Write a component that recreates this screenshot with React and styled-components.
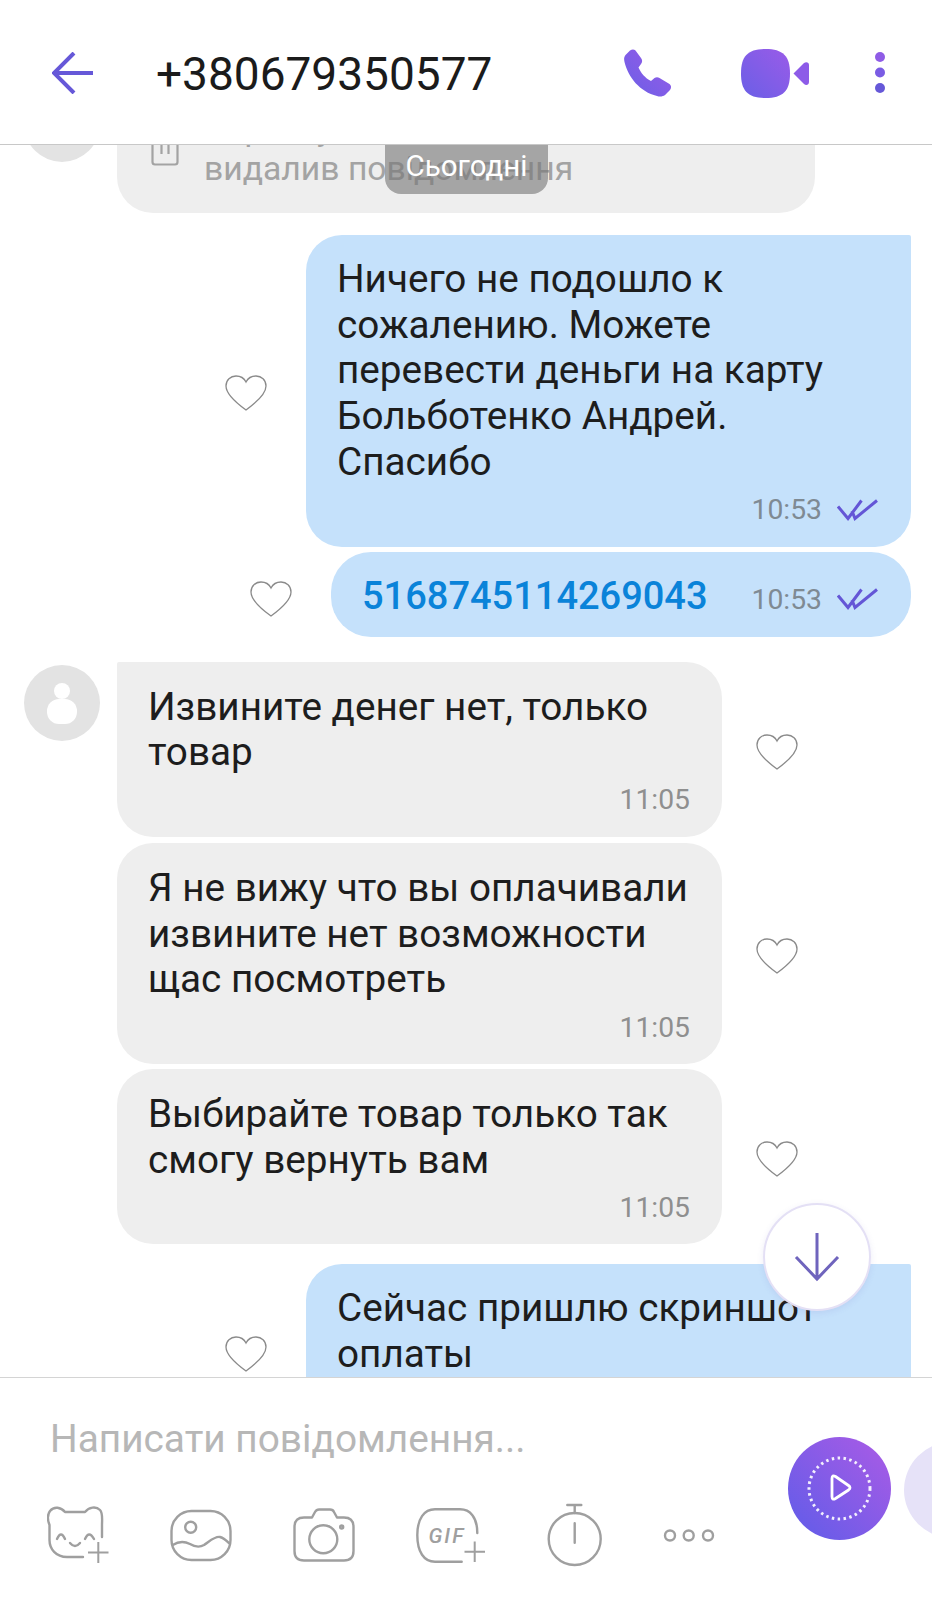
import React from "react";
import styled, { createGlobalStyle } from "styled-components";

const GlobalStyle = createGlobalStyle`
  html, body {
    margin: 0;
    padding: 0;
    background: #fff;
  }
  * {
    box-sizing: border-box;
  }
`;

const PURPLE = "#6456d6";
const GREY_ICON = "#9f9f9f";

function Gradient({ id }) {
  return (
    <defs>
      <linearGradient id={id} x1="0" y1="1" x2="1" y2="0">
        <stop offset="0" stopColor="#6a5fe6" />
        <stop offset="1" stopColor="#9a5be8" />
      </linearGradient>
    </defs>
  );
}

function BackIcon() {
  return (
    <HeadIcon width="41" height="42" viewBox="0 0 41 42">
      <path d="M2 21H41M22 1L2 21L22 41" fill="none" stroke="#6658d8" strokeWidth="4" />
    </HeadIcon>
  );
}

function PhoneIcon() {
  return (
    <HeadIcon width="48" height="48" viewBox="0 0 48 48">
      <Gradient id="phoneFill" />
      <path
        d="M6 1.5C8 0 10 0 11.5 1.5L17 9C18.5 11 18.5 13 17 15L14.5 18.5C17 24 21 29 27 32L30.5 29C32 28 34 28 35.5 29L45.5 35C47.5 36.5 47.5 39 46 41L41 46C39 47.5 36 48 33 47C16 43 4 28 .5 13C-.2 10 0 8 1.5 6Z"
        fill="url(#phoneFill)"
      />
    </HeadIcon>
  );
}

function VideoIcon() {
  return (
    <HeadIcon width="68" height="49" viewBox="0 0 68 49">
      <Gradient id="videoFill" />
      <path d="M24.5 0C42 0 49 7 49 24.5C49 42 42 49 24.5 49C7 49 0 42 0 24.5C0 7 7 0 24.5 0Z" fill="url(#videoFill)" />
      <path d="M52.5 24.5L63 14C65 12.5 68 13 68 16V33C68 36 65 37 63 35Z" fill="#8d5be8" />
    </HeadIcon>
  );
}

function MoreIcon() {
  return (
    <HeadIcon width="10" height="42" viewBox="0 0 10 42">
      <circle cx="5" cy="5" r="5" fill="#8f5ce6" />
      <circle cx="5" cy="20.5" r="5" fill="#7a5ce4" />
      <circle cx="5" cy="36" r="5" fill="#6658d8" />
    </HeadIcon>
  );
}

function TrashIcon() {
  return (
    <DeletedIcon width="28" height="40" viewBox="0 0 28 40">
      <path d="M1.5 0V36Q1.5 38.5 4 38.5H24Q26.5 38.5 26.5 36V0M10.5 0V28M17.5 0V28" fill="none" stroke="#a3a3a3" strokeWidth="2.2" />
    </DeletedIcon>
  );
}

function HeartIcon({ $drop }) {
  return (
    <HeartSvg $drop={$drop} width="42" height="36" viewBox="0 0 42 36">
      <path
        d="M21 35C10 27 1 19 1 11C1 5 5.5 1 11 1C15 1 19 3 21 7C23 3 27 1 31 1C36.5 1 41 5 41 11C41 19 32 27 21 35Z"
        fill="#fff"
        stroke="#8a8a8a"
        strokeWidth="1.3"
      />
    </HeartSvg>
  );
}

function TicksIcon() {
  return (
    <svg width="41" height="22" viewBox="0 0 41 22">
      <path d="M1 7.5L11 19.5L24.5 1.5M15 12L18 19.5L40 1.5" fill="none" stroke={PURPLE} strokeWidth="3" />
    </svg>
  );
}

function PersonIcon() {
  return (
    <svg width="30" height="42" viewBox="0 0 30 42">
      <circle cx="15" cy="9" r="8" fill="#fff" />
      <rect x="0" y="17" width="30" height="25" rx="12" fill="#fff" />
    </svg>
  );
}

function StickerIcon() {
  return (
    <ToolSvg viewBox="0 0 72 66">
      <path d="M36 54H20C9 54 2.5 46 2.5 37V22C.5 17 0 12 3 8C7 3 14 4 18 9H38C42 4 49 3 53 7C56 10 55 16 55 22V34" />
      <path d="M10 36Q14 27 18 36M38 36Q42 27 47 36M23 40Q28 46 33 40" />
      <ToolPlus d="M51.3 39V60M41 49.5H61.5" />
    </ToolSvg>
  );
}

function GalleryIcon() {
  return (
    <ToolSvg viewBox="0 0 72 66">
      <rect x="1.5" y="8" width="59" height="49" rx="20" />
      <circle cx="20.7" cy="24.3" r="5.5" />
      <path d="M2.7 42C9 38 14 38 20 41C25 44 29 45 34 42C40 38 45 33 50 34C54 35 57 38 59.3 40.3" />
    </ToolSvg>
  );
}

function CameraIcon() {
  return (
    <ToolSvg viewBox="0 0 72 66">
      <path d="M1.5 24Q1.5 14.5 11 14.5H19L22 9Q23.5 6.5 26 6.5H37Q40 6.5 41 9L44 14.5H51Q60.5 14.5 60.5 24V48Q60.5 57.5 51 57.5H11Q1.5 57.5 1.5 48Z" />
      <circle cx="30.3" cy="36.3" r="14" />
      <circle cx="48.7" cy="24" r="1.5" />
    </ToolSvg>
  );
}

function GifIcon() {
  return (
    <ToolSvg viewBox="0 0 72 66">
      <path d="M61.3 30C61.3 14 54 6.3 44 6.3H19C8 6.3 1.3 16 1.3 32C1.3 49 8 58.7 19 58.7H45.7" />
      <GifLabel x="12.5" y="40">GIF</GifLabel>
      <ToolPlus d="M58.7 38.5V59M48.5 48.7H69" />
    </ToolSvg>
  );
}

function TimerIcon() {
  return (
    <ToolSvg viewBox="0 0 72 66">
      <circle cx="35.7" cy="36" r="26" />
      <path d="M28.3 2H42.3M35.7 2V10M35.7 20.3V39.7" />
    </ToolSvg>
  );
}

function DotsIcon() {
  return (
    <ToolSvg viewBox="0 0 72 66">
      <circle cx="8" cy="32.5" r="5" />
      <circle cx="26.7" cy="32.5" r="5" />
      <circle cx="46" cy="32.5" r="5" />
    </ToolSvg>
  );
}

function SendIcon() {
  return (
    <SendSvg width="103" height="103" viewBox="0 0 103 103">
      <defs>
        <linearGradient id="sendFill" x1="0.15" y1="0.85" x2="0.85" y2="0.15">
          <stop offset="0" stopColor="#6a5ce8" />
          <stop offset="1" stopColor="#a05be6" />
        </linearGradient>
      </defs>
      <circle cx="51.5" cy="51.5" r="51.5" fill="url(#sendFill)" />
      <circle cx="51.5" cy="51.5" r="30.5" fill="none" stroke="#fff" strokeWidth="3" strokeDasharray="2.5 3.4" opacity=".9" />
      <path d="M44 41.5Q44 37.5 47.5 39.5L60.5 48.5Q63.5 50.5 60.5 53L47.5 61.5Q44 63.5 44 59.5Z" fill="none" stroke="#fff" strokeWidth="2.8" />
    </SendSvg>
  );
}

function DownIcon() {
  return (
    <svg width="46" height="50" viewBox="0 0 46 50">
      <path d="M23 1V47M2 25L23 47L44 25" fill="none" stroke="#6f64bd" strokeWidth="3" />
    </svg>
  );
}

function Stamp({ time, read }) {
  return (
    <StampRow>
      <Time>{time}</Time>
      {read && <TicksIcon />}
    </StampRow>
  );
}

export default function App() {
  return (
    <Page>
      <GlobalStyle />
      <Header>
        <BackSlot>
          <BackIcon />
        </BackSlot>
        <Title>+380679350577</Title>
        <CallSlot>
          <PhoneIcon />
        </CallSlot>
        <VideoSlot>
          <VideoIcon />
        </VideoSlot>
        <MoreIcon />
      </Header>

      <Chat>
        <DatePill>Сьогодні</DatePill>

        <Row $top={-62}>
          <Avatar />
          <DeletedBubble>
            <TrashIcon />
            <DeletedText>
              Користувач
              <br />
              видалив повідомлення
            </DeletedText>
          </DeletedBubble>
        </Row>

        <OutRow $top={22}>
          <HeartIcon />
          <OutBubble $first>
            <MsgText>
              Ничего не подошло к
              <br />
              сожалению. Можете
              <br />
              перевести деньги на карту
              <br />
              Больботенко Андрей.
              <br />
              Спасибо
            </MsgText>
            <Stamp time="10:53" read />
          </OutBubble>
        </OutRow>

        <OutRow $top={5}>
          <HeartIcon $drop={9} />
          <CardBubble>
            <CardNumber>5168745114269043</CardNumber>
            <Stamp time="10:53" read />
          </CardBubble>
        </OutRow>

        <Row $top={25}>
          <Avatar>
            <PersonIcon />
          </Avatar>
          <InBubble $first>
            <MsgText>
              Извините денег нет, только
              <br />
              товар
            </MsgText>
            <Stamp time="11:05" />
          </InBubble>
          <HeartIcon />
        </Row>

        <InRow $top={6}>
          <InBubble>
            <MsgText>
              Я не вижу что вы оплачивали
              <br />
              извините нет возможности
              <br />
              щас посмотреть
            </MsgText>
            <Stamp time="11:05" />
          </InBubble>
          <HeartIcon />
        </InRow>

        <InRow $top={5}>
          <InBubble>
            <MsgText>
              Выбирайте товар только так
              <br />
              смогу вернуть вам
            </MsgText>
            <Stamp time="11:05" />
          </InBubble>
          <HeartIcon />
        </InRow>

        <OutRow $top={20}>
          <HeartIcon />
          <OutBubble $first>
            <MsgText>
              Сейчас пришлю скриншот
              <br />
              оплаты
            </MsgText>
            <Stamp time="11:06" />
          </OutBubble>
        </OutRow>

        <ScrollDown>
          <DownIcon />
        </ScrollDown>
      </Chat>

      <Composer>
        <InputCol>
          <Placeholder>Написати повідомлення...</Placeholder>
          <Tools>
            <StickerIcon />
            <GalleryIcon />
            <CameraIcon />
            <GifIcon />
            <TimerIcon />
            <DotsIcon />
          </Tools>
        </InputCol>
        <SendIcon />
        <PeekCircle />
      </Composer>
    </Page>
  );
}

const Page = styled.div`
  width: 932px;
  height: 1600px;
  display: flex;
  flex-direction: column;
  overflow: hidden;
  background: #fff;
  font-family: Roboto, "Liberation Sans", sans-serif;
`;

const Header = styled.header`
  height: 145px;
  flex-shrink: 0;
  display: flex;
  align-items: center;
  padding: 2px 47px 0 52px;
  background: #fff;
  border-bottom: 1px solid #c8c8c8;
  position: relative;
  z-index: 2;
`;

const HeadIcon = styled.svg`
  display: block;
  flex-shrink: 0;
`;

const BackSlot = styled.div`
  width: 104px;
`;

const Title = styled.div`
  flex: 1;
  padding-top: 2px;
  font-size: 46px;
  color: #1b1b1b;
  line-height: 56px;
`;

const CallSlot = styled.div`
  margin-right: 69px;
`;

const VideoSlot = styled.div`
  margin-right: 66px;
`;

const Chat = styled.main`
  flex: 1;
  min-height: 0;
  position: relative;
  overflow: hidden;
  display: flex;
  flex-direction: column;
`;

const DatePill = styled.div`
  position: absolute;
  top: 0;
  left: 385px;
  width: 163px;
  height: 49px;
  padding-bottom: 7px;
  display: flex;
  align-items: center;
  justify-content: center;
  border-radius: 0 0 16px 16px;
  background: rgba(120, 120, 120, 0.62);
  color: #fff;
  font-size: 29.5px;
  z-index: 1;
`;

const Row = styled.div`
  display: flex;
  align-items: center;
  flex-shrink: 0;
  margin-top: ${(p) => p.$top}px;
  padding-left: 24px;
`;

const InRow = styled(Row)`
  padding-left: 117px;
`;

const OutRow = styled.div`
  display: flex;
  align-items: center;
  justify-content: flex-end;
  flex-shrink: 0;
  gap: 39px;
  margin-top: ${(p) => p.$top}px;
  padding-right: 21px;
`;

const HeartSvg = styled.svg`
  flex-shrink: 0;
  margin-top: ${(p) => p.$drop ?? 5}px;
  ${Row} > & {
    margin-left: 34px;
  }
`;

const Avatar = styled.div`
  width: 76px;
  height: 76px;
  margin: 3px 17px 0 0;
  align-self: flex-start;
  flex-shrink: 0;
  border-radius: 50%;
  background: #e3e3e3;
  display: flex;
  align-items: center;
  justify-content: center;
`;

const Bubble = styled.div`
  border-radius: 36px;
  flex-shrink: 0;
`;

const DeletedBubble = styled(Bubble)`
  width: 698px;
  height: 130px;
  display: flex;
  padding: 26px 0 0 34px;
  background: #eeeeee;
`;

const DeletedIcon = styled.svg`
  margin-top: 17px;
  flex-shrink: 0;
`;

const DeletedText = styled.div`
  margin-left: 25px;
  font-size: 33.7px;
  line-height: 40px;
  color: #a3a3a3;
`;

const OutBubble = styled(Bubble)`
  width: 605px;
  padding: 21px 33px 0 31px;
  background: #c5e1fb;
  border-top-right-radius: ${(p) => (p.$first ? "2px" : "36px")};
`;

const InBubble = styled(Bubble)`
  width: 605px;
  padding: 22px 32px 0 31px;
  background: #eeeeee;
  border-top-left-radius: ${(p) => (p.$first ? "2px" : "36px")};
`;

const CardBubble = styled(Bubble)`
  width: 580px;
  height: 85px;
  display: flex;
  align-items: center;
  justify-content: space-between;
  padding: 0 33px 0 31px;
  background: #c5e1fb;
  border-radius: 40px;
`;

const MsgText = styled.div`
  font-size: 38.7px;
  line-height: 45.7px;
  color: #1d1d1d;
  white-space: nowrap;
`;

const CardNumber = styled.div`
  padding-top: 4px;
  font-size: 38px;
  font-weight: 500;
  color: #0a83d9;
`;

const StampRow = styled.div`
  display: flex;
  align-items: center;
  justify-content: flex-end;
  gap: 15px;
  height: 30px;
  margin-bottom: 22px;
  margin-top: 10px;
  ${CardBubble} & {
    margin: 10px 0 0;
  }
`;

const Time = styled.span`
  font-size: 28.3px;
  color: #7f8a93;
  ${InBubble} & {
    color: #8f8f8f;
  }
`;

const ScrollDown = styled.div`
  position: absolute;
  left: 763px;
  top: 1058px;
  width: 108px;
  height: 108px;
  display: flex;
  align-items: center;
  justify-content: center;
  border-radius: 50%;
  background: #fff;
  border: 2px solid #e4e0f5;
  box-shadow: 0 2px 6px rgba(110, 100, 190, 0.12);
`;

const Composer = styled.footer`
  height: 223px;
  flex-shrink: 0;
  display: flex;
  align-items: flex-start;
  padding-top: 59px;
  overflow: hidden;
  background: #fff;
  border-top: 1px solid #d4d4d4;
  position: relative;
  z-index: 2;
`;

const InputCol = styled.div`
  width: 788px;
  flex-shrink: 0;
  margin-top: -21px;
`;

const Placeholder = styled.div`
  padding-left: 50px;
  font-size: 38.8px;
  line-height: 46px;
  color: #b7b7b7;
`;

const Tools = styled.div`
  display: flex;
  padding: 41px 0 0 47px;
`;

const ToolSvg = styled.svg`
  width: 72px;
  height: 66px;
  margin-right: 51px;
  flex-shrink: 0;
  fill: none;
  stroke: ${GREY_ICON};
  stroke-width: 2.4;
  stroke-linecap: round;
  stroke-linejoin: round;
`;

const ToolPlus = styled.path`
  stroke-width: 2;
  stroke-linecap: butt;
`;

const GifLabel = styled.text`
  font-family: Roboto, "Liberation Sans", sans-serif;
  font-size: 21px;
  font-style: italic;
  font-weight: 500;
  letter-spacing: 2px;
  fill: ${GREY_ICON};
  stroke: none;
`;

const SendSvg = styled.svg`
  flex-shrink: 0;
`;

const PeekCircle = styled.div`
  width: 96px;
  height: 96px;
  flex-shrink: 0;
  margin: 5px 0 0 13px;
  border-radius: 50%;
  background: #e6e2f8;
`;
